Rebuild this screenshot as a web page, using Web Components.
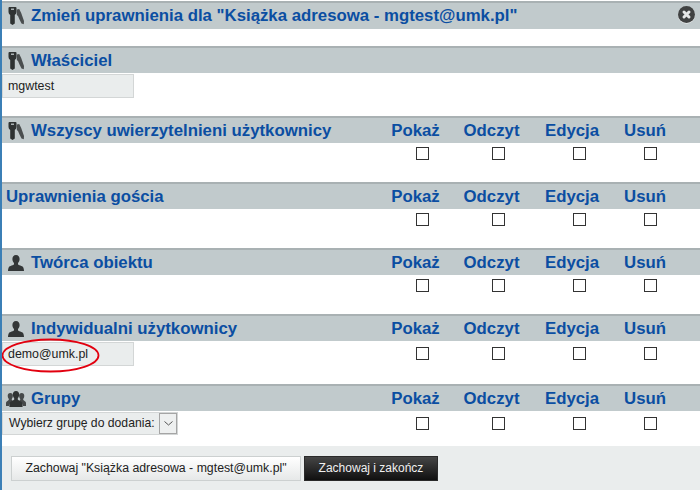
<!DOCTYPE html>
<html lang="pl"><head><meta charset="utf-8"><title>Uprawnienia</title>
<style>
html,body{margin:0;padding:0;background:#fff;font-family:"Liberation Sans",Arial,sans-serif}
</style></head><body>
<perm-dialog>
  <perm-section label='Zmień uprawnienia dla "Książka adresowa - mgtest@umk.pl"' icon="keys" closable style="--body:17px;--top:1px;--head:28px"></perm-section>
  <perm-section label="Właściciel" icon="keys" style="--body:43px"><perm-field>mgwtest</perm-field></perm-section>
  <perm-section label="Wszyscy uwierzytelnieni użytkownicy" icon="keys" cols style="--body:39px"></perm-section>
  <perm-section label="Uprawnienia gościa" cols style="--body:39px"></perm-section>
  <perm-section label="Twórca obiektu" icon="user" cols style="--body:39px"></perm-section>
  <perm-section label="Indywidualni użytkownicy" icon="user" cols style="--body:43px;--cb:6px"><perm-field circled>demo@umk.pl</perm-field></perm-section>
  <perm-section label="Grupy" icon="group" cols style="--body:35px;--cb:6px"><perm-select>Wybierz grupę do dodania:</perm-select></perm-section>
  <perm-footer>
    <perm-button>Zachowaj "Książka adresowa - mgtest@umk.pl"</perm-button>
    <perm-button dark>Zachowaj i zakończ</perm-button>
  </perm-footer>
</perm-dialog>
<script>
const ICONS={
keys:`<svg width="16" height="18" viewBox="0 0 16 18"><path fill="#4a4e4f" d="M8.800 2.500l2.400-.5 2 4L16 14l-.2 3.200-2.300-.7-2-4-1.500-3.500-1.200-1z"/><path fill="#2f3333" d="M.5 1Q.5 0 1.500 0h6Q8.500 0 8.500 1v4Q8.500 7 6.800 8v8.500L4.500 18l-2.300-1.500V8Q.5 7 .5 5z"/><rect x="3" y="1.500" width="3" height="1.500" fill="#aab2b4"/></svg>`,
user:`<svg width="16" height="16" viewBox="0 0 16 16"><path fill="#333637" d="M8 0c2.400 0 3.600 1.800 3.600 4 0 1.800-.7 3-1.600 4v1.300c0 .9 4.500 1.600 5.300 3.100.4.900.7 2.300.7 3.600H0c0-1.300.3-2.700.7-3.600.8-1.500 5.300-2.200 5.300-3.100V8C5.100 7 4.400 5.800 4.400 4 4.400 1.800 5.600 0 8 0z"/></svg>`,
group:`<svg width="20" height="16" viewBox="0 0 20 16"><path fill="#45494a" d="M4.300 2c1.700 0 2.600 1.300 2.600 3 0 1.200-.4 2.100-1.100 2.900v1l.9.600-2.400 1.900L3 15H0v-3.200c0-1.400 2.800-2.300 2.800-3V7.900C2.100 7.100 1.700 6.200 1.700 5c0-1.700.9-3 2.600-3zM15.700 2c1.700 0 2.600 1.300 2.600 3 0 1.200-.4 2.100-1.100 2.900v.9c0 .7 2.800 1.600 2.800 3V15h-3l-1.300-3.600-2.400-1.900.9-.6v-1c-.7-.8-1.100-1.700-1.100-2.900 0-1.700.9-3 2.600-3z"/><path fill="#2f3333" d="M10 0c2.100 0 3.200 1.600 3.200 3.600 0 1.600-.6 2.800-1.400 3.700v1.300c0 .8 3.700 1.500 4.300 2.900.3.900.5 2.500.5 4.500H3.400c0-2 .2-3.600.5-4.500.6-1.400 4.300-2.100 4.300-2.900V7.300C7.400 6.400 6.800 5.200 6.800 3.600 6.800 1.600 7.900 0 10 0z"/></svg>`,
close:`<svg width="17" height="18" viewBox="0 0 17 18"><circle cx="8.500" cy="9.300" r="8.500" fill="#e8ebeb"/><circle cx="8.500" cy="8.500" r="8.500" fill="#404242"/><path d="M6 6l5 5M11 6l-5 5" stroke="#e4e6e6" stroke-width="3" stroke-linecap="round"/></svg>`
};
const COLS=["Pokaż","Odczyt","Edycja","Usuń"];
const GRID="grid-template-columns:376px 75px 77px 84px 62px 24px";
class PermDialog extends HTMLElement{constructor(){super();this.attachShadow({mode:"open"}).innerHTML=`<style>
:host{display:block;width:698px;height:490px;border-left:2px solid #3b7fb6;background:#fff;overflow:hidden;color:#222;font:12px "Liberation Sans",Arial,sans-serif}
</style><slot></slot>`}}
class PermSection extends HTMLElement{constructor(){super();const r=this.attachShadow({mode:"open"});
const cols=this.hasAttribute("cols"),icon=this.getAttribute("icon");
r.innerHTML=`<style>
:host{display:block;margin-top:var(--top,0)}
.head{position:relative;display:grid;${GRID};align-items:center;box-sizing:border-box;height:var(--head,27px);background:#c1cacc;border-top:2px solid #a9b1b3;font-weight:bold;font-size:16.800px;color:#0b4ea2;white-space:nowrap}
.title{display:flex;align-items:center;gap:7px;padding-left:4px;grid-column:1}
.wide{grid-column:1/-1}
.ic{display:flex;width:16px;justify-content:center;margin-left:2px}
.ic svg{flex:none}
.cn{text-align:center}
.body{display:grid;${GRID};height:var(--body);align-items:start}
.cell{grid-column:1;padding-left:0}
.cb{display:flex;justify-content:center;padding:var(--cb,4px) 0 0 14px}
.cb.last{padding-left:10px}
input{appearance:none;-webkit-appearance:none;margin:0;width:13px;height:13px;box-sizing:border-box;border:1px solid #333;background:#fff;border-radius:0}
.x{position:absolute;right:5px;top:3px;display:flex}
</style>
<div class="head"><div class="title ${cols?"":"wide"}">${icon?`<span class="ic">${ICONS[icon]}</span>`:""}<span>${this.getAttribute("label").replace(/&/g,"&amp;")}</span></div>${cols?COLS.map(c=>`<div class="cn">${c}</div>`).join(""):""}${this.hasAttribute("closable")?`<span class="x">${ICONS.close}</span>`:""}</div>
<div class="body"><div class="cell"><slot></slot></div>${cols?COLS.map((c,i)=>`<div class="cb${i==3?" last":""}"><input type="checkbox" aria-label="${c}"></div>`).join(""):""}</div>`}}
class PermField extends HTMLElement{constructor(){super();const r=this.attachShadow({mode:"open"});
r.innerHTML=`<style>
:host{display:block;position:relative;box-sizing:border-box;width:132px;height:24px;margin-top:1px;line-height:22px;padding-left:5px;background:#eaeded;border:1px solid #d3d6d6;font-size:12.400px;color:#222;white-space:nowrap}
svg{position:absolute;left:-2px;top:-5px;overflow:visible}
</style><slot></slot>${this.hasAttribute("circled")?`<svg width="100" height="35" viewBox="0 0 100 35"><ellipse cx="49.500" cy="17.500" rx="48" ry="16" fill="none" stroke="#e2000f" stroke-width="1.800"/></svg>`:""}`}}
class PermSelect extends HTMLElement{constructor(){super();this.attachShadow({mode:"open"}).innerHTML=`<style>
:host{display:flex;box-sizing:border-box;width:176px;height:23px;margin-top:1px;background:#eaeded;border:1px solid #d3d6d6;font-size:12.200px;color:#222;white-space:nowrap;line-height:21px;padding-left:6px;justify-content:space-between}
.b{box-sizing:border-box;width:18px;height:21px;background:#eef0f0;border:1px solid #a5a5a5;display:flex;align-items:center;justify-content:center}
</style><span><slot></slot></span><span class="b"><svg width="9" height="5" viewBox="0 0 9 5"><path d="M.5.500l4 3.500 4-3.500" fill="none" stroke="#555" stroke-width="1"/></svg></span>`}}
class PermFooter extends HTMLElement{constructor(){super();this.attachShadow({mode:"open"}).innerHTML=`<style>
:host{display:flex;gap:3px;box-sizing:border-box;height:44px;padding:10px 0 0 9px;background:#eaeded;align-items:flex-start}
</style><slot></slot>`}}
class PermButton extends HTMLElement{constructor(){super();const d=this.hasAttribute("dark");this.attachShadow({mode:"open"}).innerHTML=`<style>
:host{display:block;box-sizing:border-box;height:25px;line-height:23px;padding:0 13.500px;white-space:nowrap;cursor:pointer;${d?"font-size:12px;color:#f0f0f0;background:linear-gradient(#454545,#101010);border:1px solid #2a2a2a;":"font-size:12.300px;color:#222;background:linear-gradient(#fff,#e6e8e8);border:1px solid #ccd0d0;"}}
</style><slot></slot>`}}
customElements.define("perm-dialog",PermDialog);
customElements.define("perm-section",PermSection);
customElements.define("perm-field",PermField);
customElements.define("perm-select",PermSelect);
customElements.define("perm-footer",PermFooter);
customElements.define("perm-button",PermButton);
</script>
</body></html>
